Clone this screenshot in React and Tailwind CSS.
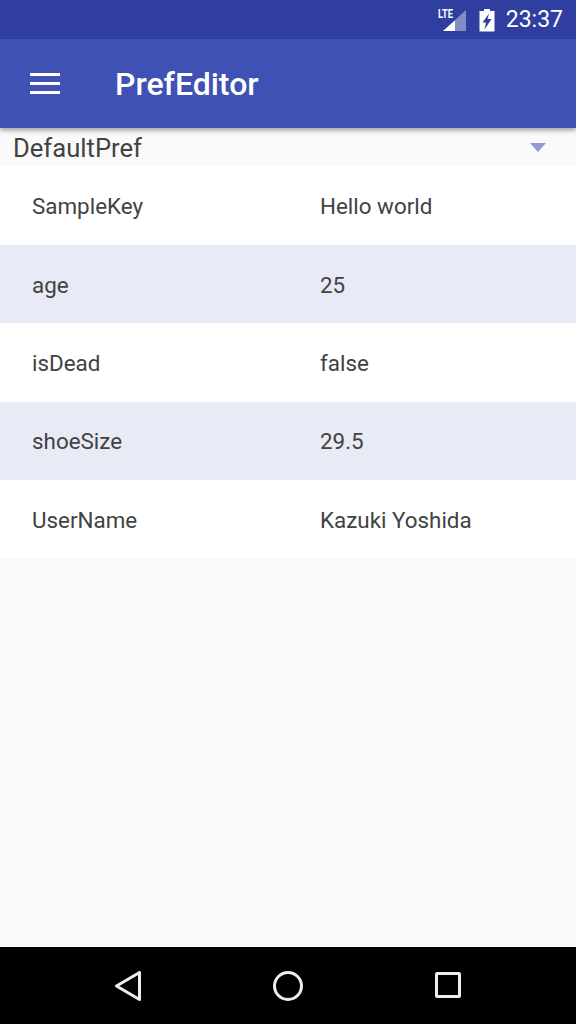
const rows = [
  { name: "SampleKey", value: "Hello world" },
  { name: "age", value: "25" },
  { name: "isDead", value: "false" },
  { name: "shoeSize", value: "29.5" },
  { name: "UserName", value: "Kazuki Yoshida" },
];

const StatusBar = () => (
  <div className="h-[39px] bg-[#303f9f] flex items-center justify-end text-white pr-[13px]">
    <svg width="30" height="24" viewBox="0 0 30 24" className="mr-[12px]">
      <path d="M29 2 L29 23 L6 23 Z" fill="#ffffff" fillOpacity="0.4" />
      <path d="M18 23 L6 23 L18 12.5 Z" fill="#ffffff" />
      <text x="1" y="10" fontSize="12" fontWeight="700" fill="#ffffff" fontFamily="Roboto, sans-serif" textLength="15" lengthAdjust="spacingAndGlyphs">LTE</text>
    </svg>
    <svg width="16" height="24" viewBox="0 0 16 24" className="mr-[11px]">
      <path fillRule="evenodd" fill="#ffffff" d="M5 1 H11 V3 H15.5 V23.5 H0.5 V3 H5 Z M10 5.5 L3.5 14.5 H7 L5.5 21.5 L12.5 11 H8.5 Z" />
    </svg>
    <span className="text-[23px] leading-none">23:37</span>
  </div>
);

const AppBar = () => (
  <div className="relative z-10 h-[89px] bg-[#3f51b5] flex items-center shadow-[0_3px_4px_rgba(0,0,0,0.3)]">
    <div className="ml-[30px] w-[30px] flex flex-col gap-[6px]">
      <div className="h-[3px] bg-white" />
      <div className="h-[3px] bg-white" />
      <div className="h-[3px] bg-white" />
    </div>
    <span className="ml-[55px] text-[32px] font-medium text-white">PrefEditor</span>
  </div>
);

const NavBar = () => (
  <div className="h-[77px] bg-black flex items-start justify-between pl-[114px] pr-[115px] pt-[24px]">
    <svg width="28" height="32" viewBox="0 0 28 32" fill="none" stroke="#eeeeee" strokeWidth="3" strokeLinejoin="round">
      <path d="M25.5 1.5 L25.5 28.5 L2.5 15 Z" />
    </svg>
    <svg width="30" height="30" viewBox="0 0 30 30" fill="none" stroke="#eeeeee" strokeWidth="3" className="mr-[2px]">
      <circle cx="15" cy="15" r="13.5" />
    </svg>
    <div className="w-[26px] h-[26px] mt-[1px] border-[3px] border-[#eeeeee] rounded-[2px]" />
  </div>
);

export default function App() {
  return (
    <div className="w-[576px] h-[1024px] flex flex-col bg-[#fafafa] font-['Roboto',sans-serif] overflow-hidden">
      <StatusBar />
      <AppBar />
      <div className="h-[38.4px] flex items-center justify-between pl-[13px] pr-[30px]">
        <span className="pt-[1px] text-[25.6px] text-[#424242]">DefaultPref</span>
        <div className="w-0 h-0 border-l-[8px] border-r-[8px] border-t-[9px] border-l-transparent border-r-transparent border-t-[#8f9bdc]" />
      </div>
      <div className="flex-1">
        {rows.map((row, i) => (
          <div
            key={row.name}
            className={`h-[78.4px] flex items-center pl-[32px] pt-[3px] text-[22.4px] text-[#424242] ${i % 2 === 1 ? "bg-[#e8eaf6]" : "bg-white"}`}
          >
            <span className="w-[288px]">{row.name}</span>
            <span>{row.value}</span>
          </div>
        ))}
      </div>
      <NavBar />
    </div>
  );
}
